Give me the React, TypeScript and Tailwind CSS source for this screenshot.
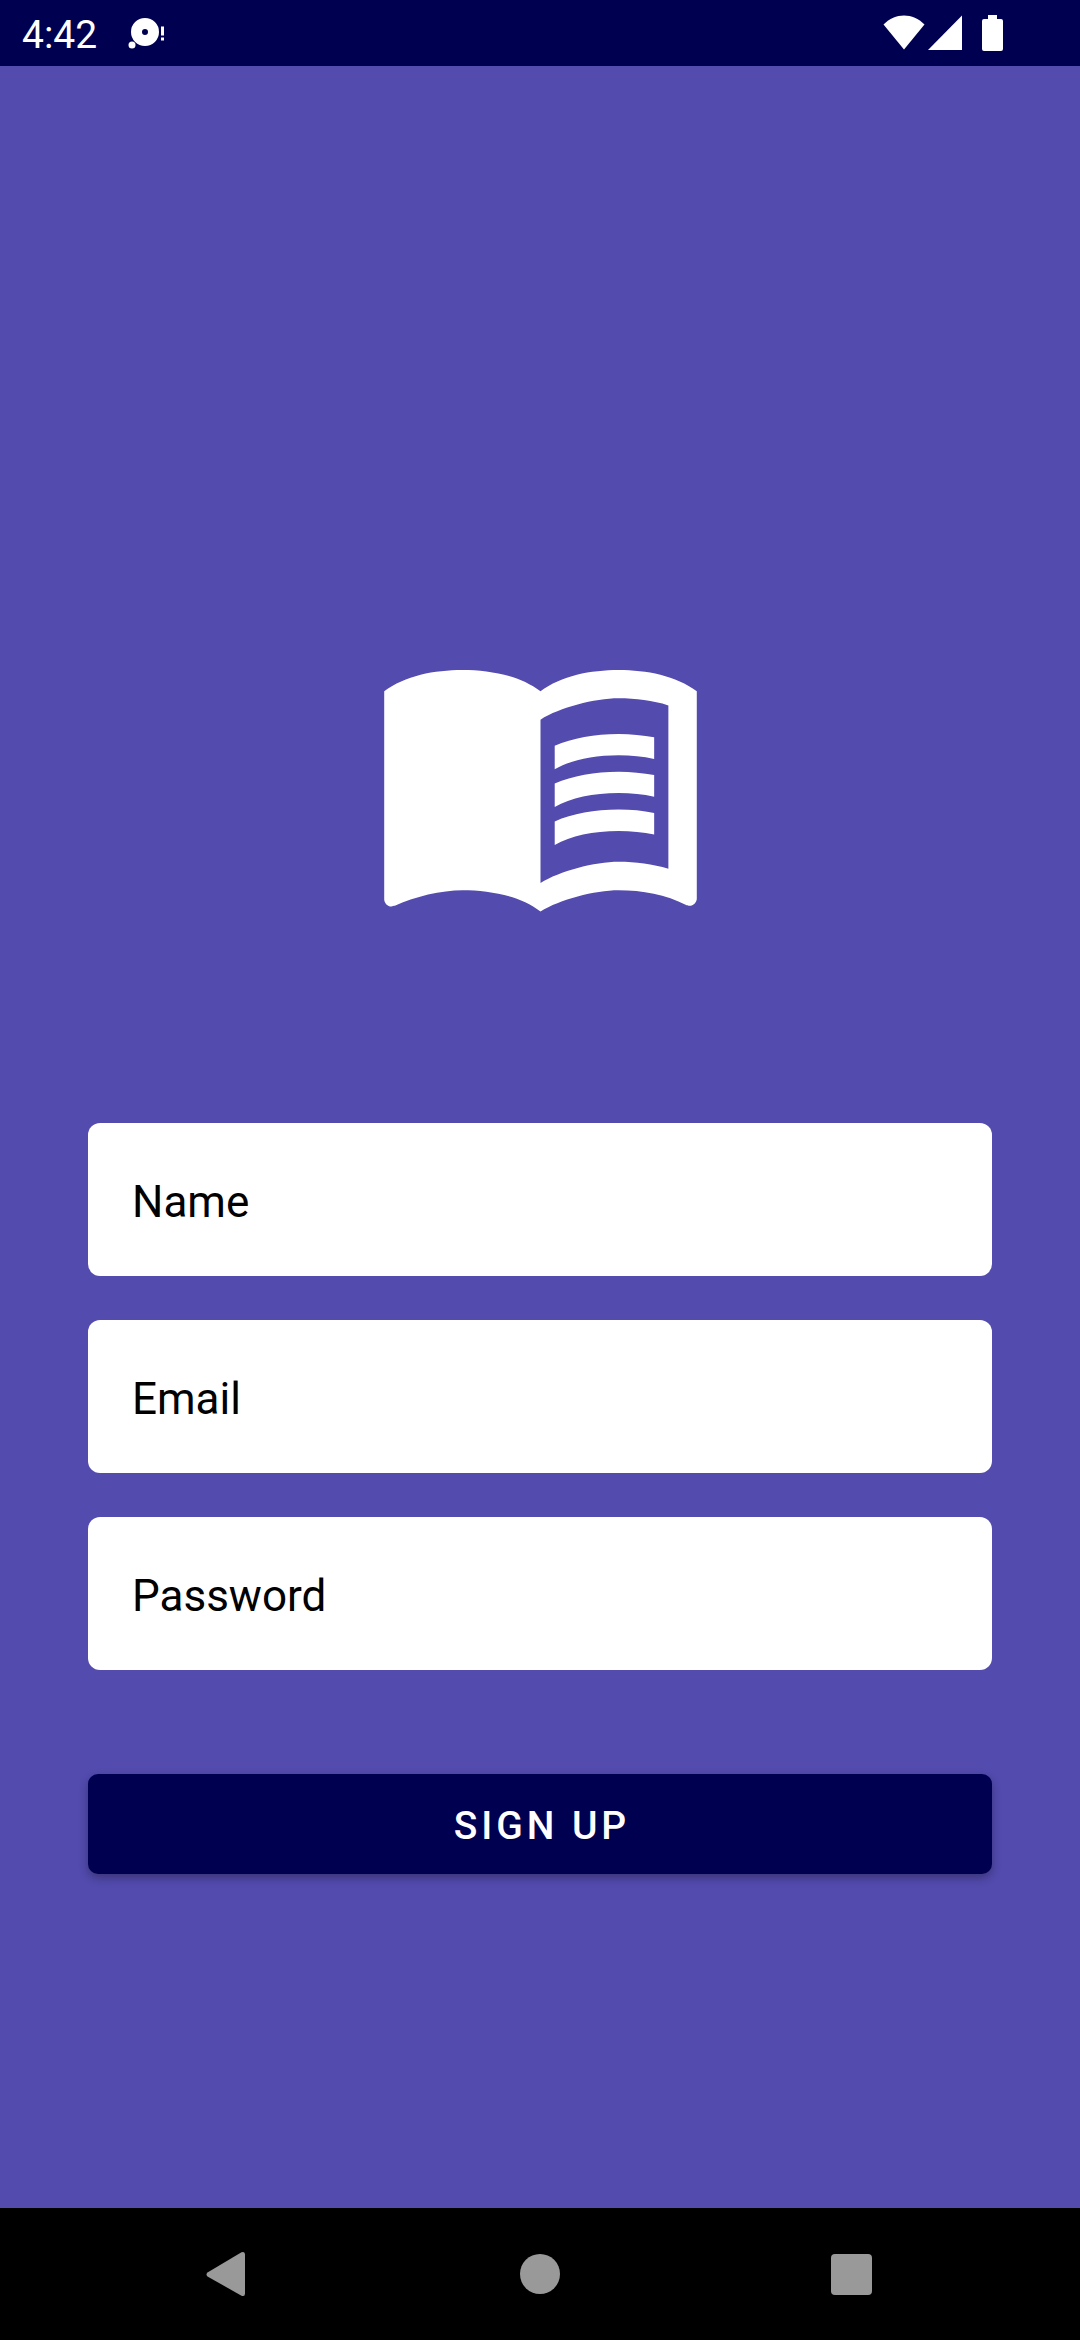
const fields = [
  { name: "Name", type: "text" },
  { name: "Email", type: "email" },
  { name: "Password", type: "password" },
];

function StatusBar() {
  return (
    <header className="flex h-[66px] items-center justify-between bg-[#000051] pl-[22px] pr-[77px] text-white">
      <div className="flex items-center gap-[30px]">
        <span className="pt-1 text-[39px] leading-none">4:42</span>
        <svg className="h-8 w-10" viewBox="0 0 40 32" fill="currentColor" aria-hidden="true">
          <path
            fillRule="evenodd"
            d="M18 1a14 14 0 1 1 0 28a14 14 0 1 1 0-28zM18 12a3 3 0 1 0 0 6a3 3 0 1 0 0-6z"
          />
          <circle cx="5" cy="28" r="3.5" />
          <path d="M34 9.500h3v9h-3zM34 20.500h3v3h-3z" />
        </svg>
      </div>
      <div className="flex items-center">
        <svg className="h-9 w-[42px]" viewBox="0 0 42 36" fill="currentColor" aria-hidden="true">
          <path d="M21 34.500L.5 9.500C6.500 3.500 13.500.5 21 .5s14.500 3 20.500 9z" />
        </svg>
        <svg className="ml-[3px] h-9 w-[34px]" viewBox="0 0 34 36" fill="currentColor" aria-hidden="true">
          <path d="M0 35L34 .5V35z" />
        </svg>
        <svg className="ml-5 h-9 w-[21px]" viewBox="0 0 21 36" fill="currentColor" aria-hidden="true">
          <path d="M6 0h9v4h4a2 2 0 0 1 2 2v28a2 2 0 0 1-2 2H2a2 2 0 0 1-2-2V6a2 2 0 0 1 2-2h4z" />
        </svg>
      </div>
    </header>
  );
}

function BookLogo() {
  return (
    <svg className="size-[341px] text-white" viewBox="0 0 24 24" fill="currentColor" role="img" aria-label="Open book">
      <path
        fillRule="evenodd"
        d="M12 6C10.550 4.900 8.450 4.500 6.500 4.500S2.450 4.900 1 6v14.650c0 .25.25.5.5.5.1 0 .15-.05.25-.05C3.100 20.450 5.050 20 6.500 20c1.950 0 4.050.4 5.500 1.500 1.350-.85 3.800-1.500 5.500-1.500 1.650 0 3.350.3 4.750 1.050.1.05.15.05.25.05.25 0 .5-.25.5-.5V6c-1.450-1.100-3.550-1.500-5.500-1.500S13.450 4.900 12 6zM21 18.500c-1.100-.35-2.300-.5-3.500-.5-1.700 0-4.150.65-5.500 1.500V8c1.350-.85 3.800-1.500 5.500-1.500 1.200 0 2.400.15 3.500.5z"
      />
      <path d="M17.500 10.500c.88 0 1.730.09 2.500.26V9.240c-.79-.15-1.640-.24-2.500-.24-1.700 0-3.240.29-4.500.83v1.660c1.130-.64 2.700-.99 4.500-.99z" />
      <path d="M13 12.490v1.660c1.130-.64 2.700-.99 4.500-.99.88 0 1.730.09 2.500.26V11.900c-.79-.15-1.640-.24-2.500-.24-1.700 0-3.240.3-4.500.83z" />
      <path d="M17.500 14.330c-1.700 0-3.240.29-4.500.83v1.660c1.130-.64 2.700-.99 4.500-.99.88 0 1.730.09 2.500.26v-1.520c-.79-.16-1.640-.24-2.500-.24z" />
    </svg>
  );
}

function NavigationBar() {
  return (
    <nav className="flex h-[132px] items-center justify-center bg-black text-[#999999]">
      <button type="button" aria-label="Back" className="flex h-full w-[311px] items-center justify-center">
        <svg className="h-12 w-12" viewBox="0 0 48 48" fill="currentColor">
          <path d="M2.500 22.500L36.500 2.300Q40 1 40 4.500V43.500Q40 47 36.500 45.700L2.500 26.500Q.5 24.500 2.500 22.500z" />
        </svg>
      </button>
      <button type="button" aria-label="Home" className="flex h-full w-[311px] items-center justify-center">
        <span className="size-10 rounded-full bg-current" />
      </button>
      <button type="button" aria-label="Recent apps" className="flex h-full w-[311px] items-center justify-center">
        <span className="size-[41px] rounded bg-current" />
      </button>
    </nav>
  );
}

export default function App() {
  return (
    <div className="flex min-h-screen flex-col bg-[#534bae] font-[Roboto,sans-serif]">
      <StatusBar />
      <main className="flex flex-1 flex-col items-center px-[88px] pt-[540px]">
        <BookLogo />
        <form className="mt-44 flex w-full flex-col" onSubmit={(event) => event.preventDefault()}>
          <div className="flex flex-col gap-11">
            {fields.map((field) => (
              <input
                key={field.name}
                type={field.type}
                name={field.name.toLowerCase()}
                aria-label={field.name}
                placeholder={field.name}
                className="h-[153px] w-full rounded-xl bg-white px-11 pt-1 text-[44px] text-black outline-none placeholder:text-black"
              />
            ))}
          </div>
          <button
            type="submit"
            className="mt-[104px] h-[100px] w-full rounded-[10px] bg-[#000051] pl-1 pt-1 text-[39px] font-medium uppercase tracking-widest text-white shadow-[0_4px_10px_rgba(0,0,0,0.3)]"
          >
            Sign up
          </button>
        </form>
      </main>
      <NavigationBar />
    </div>
  );
}
